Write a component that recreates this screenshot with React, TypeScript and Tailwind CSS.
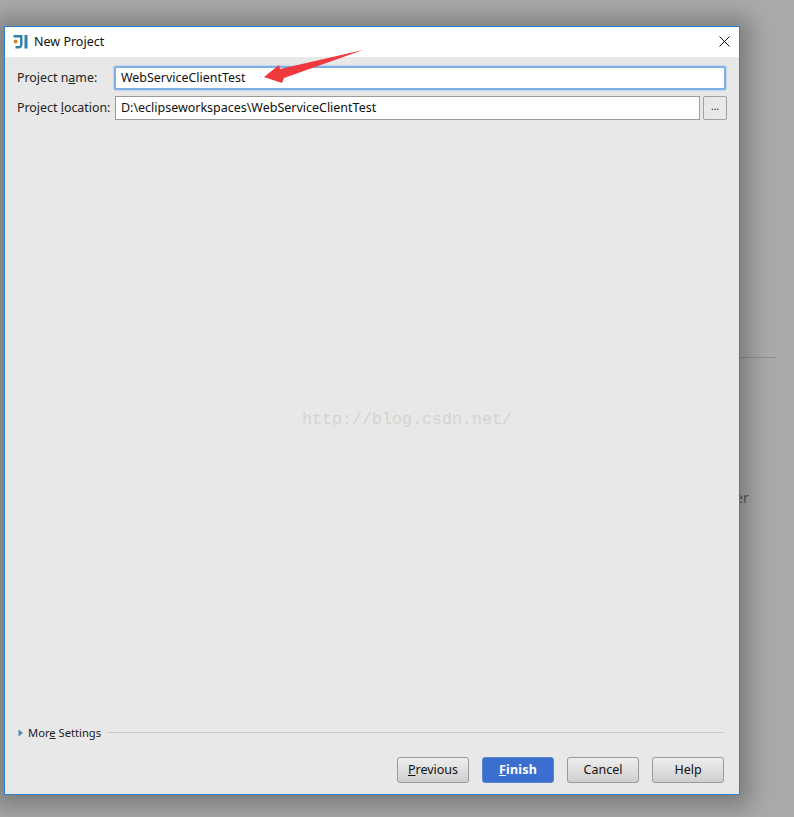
import React from "react";

function Btn({ children, primary }: { children: React.ReactNode; primary?: boolean }) {
  return primary ? (
    <button className="w-[72px] h-[26px] rounded-[3px] border border-[#5a86cc] bg-[#3b6fcf] text-white font-bold text-[12.5px] leading-none tracking-[0.2px]">
      {children}
    </button>
  ) : (
    <button className="w-[72px] h-[26px] rounded-[3px] border border-[#9a9a9a] bg-gradient-to-b from-[#eeeeee] to-[#cfcfcf] text-[#111] text-[12.5px] leading-none">
      {children}
    </button>
  );
}

export default function App() {
  return (
    <div
      className="relative w-[794px] h-[817px] overflow-hidden bg-[#aaaaaa] pt-[26px] pl-[4px]"
      style={{ fontFamily: '"Noto Sans", "Open Sans", sans-serif' }}
    >
      <div className="absolute left-[736px] top-[357px] w-[40px] h-px bg-[#8f8f8f]" />
      <div className="absolute left-[735px] top-[489px] text-[14px] leading-[18px] text-[#5d5d5d]">
        er
      </div>

      <div className="relative w-[736px] h-[769px] flex flex-col border border-[#2b7fcf] bg-[#e8e8e8] shadow-[0_2px_22px_10px_rgba(0,0,0,0.28)]">
        <div className="h-[30px] shrink-0 bg-white flex items-center pl-[8px] pr-[9px]">
          <svg width="16" height="16" viewBox="0 0 16 16" className="shrink-0">
            <circle cx="2.6" cy="7.5" r="2" fill="#c98a2b" />
            <path d="M0.5 1h9v9.5c0 2.6-2 4-4 4H2.5v-2.4H5.5c1 0 1.6-.7 1.6-1.6V3.4H0.5z" fill="#2f7fa8" />
            <rect x="11.5" y="1" width="3" height="13.5" fill="#2f7fa8" />
          </svg>
          <span className="ml-[5px] text-[12.5px] leading-none text-[#111]">New Project</span>
          <svg width="11" height="11" viewBox="0 0 11 11" className="ml-auto -mt-[2px]">
            <path d="M0.5 0.5l10 10M10.5 0.5l-10 10" stroke="#111" strokeWidth="1" fill="none" />
          </svg>
        </div>

        <div className="flex-1 flex flex-col pl-[12px] pr-[12px] pt-[8px]">
          <div className="flex items-center h-[26px]">
            <label className="w-[98px] shrink-0 text-[12.4px] text-[#222] leading-none">
              Project n<span className="underline">a</span>me:
            </label>
            <div className="w-[612px] h-[24px] -ml-px bg-white border-2 border-[#7eaee6] rounded-[2px] shadow-[0_0_2px_#7eaee6] flex items-center pl-[5px] text-[12.45px] text-[#111] leading-none">
              WebServiceClientTest
            </div>
          </div>
          <div className="flex items-center h-[24px] mt-[5px]">
            <label className="w-[98px] shrink-0 text-[12.4px] text-[#222] leading-none">
              Project <span className="underline">l</span>ocation:
            </label>
            <div className="w-[585px] h-[24px] bg-white border border-[#9a9a9a] flex items-center pl-[5px] text-[12.48px] text-[#111] leading-none">
              D:\eclipseworkspaces\WebServiceClientTest
            </div>
            <button className="ml-[3px] w-[24px] h-[24px] rounded-[2px] border border-[#a0a0a0] bg-[#e8e8e8] text-[10px] text-[#222] leading-none pb-[4px]">
              ...
            </button>
          </div>

          <div
            className="mt-[289px] ml-[285px] text-[#d4d4cf] text-[16.67px] leading-[22px] whitespace-nowrap"
            style={{ fontFamily: '"Liberation Mono", monospace' }}
          >
            http://blog.csdn.net/
          </div>

          <div className="mt-auto flex items-center h-[14px] mr-[3px]">
            <svg width="6" height="8" viewBox="0 0 6 8" className="shrink-0 ml-[1px]">
              <path d="M0.5 0.5L5 4L0.5 7.5z" fill="#4a8cc0" />
            </svg>
            <span className="ml-[4px] text-[11.2px] text-[#222] leading-none whitespace-nowrap">
              Mor<span className="underline">e</span> Settings
            </span>
            <div className="ml-[6px] mb-[2px] flex-1 h-px bg-[#cdcdcd]" />
          </div>

          <div className="flex justify-end gap-[13px] mt-[17px] mb-[11px] mr-[3px]">
            <Btn><span className="underline">P</span>revious</Btn>
            <Btn primary><span className="underline">F</span>inish</Btn>
            <Btn>Cancel</Btn>
            <Btn>Help</Btn>
          </div>
        </div>

        <svg width="100" height="34" viewBox="0 0 100 34" className="absolute left-[259px] top-[23px]">
          <path d="M99 0L20 28L18 33L0 27L15 15L16 19z" fill="#f0393c" />
        </svg>
      </div>
    </div>
  );
}
